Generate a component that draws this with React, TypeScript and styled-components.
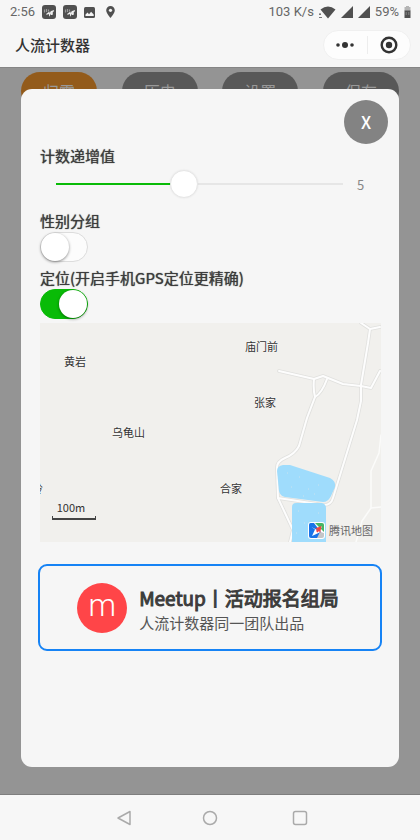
import React, { useState } from "react";
import styled, { createGlobalStyle, css } from "styled-components";

const GlobalStyle = createGlobalStyle`
  *, *::before, *::after { box-sizing: border-box; }
  body {
    margin: 0;
    background: #f6f6f6;
    color: #3c3c3c;
    font-family: "Noto Sans CJK SC", "Noto Sans", sans-serif;
  }
  button, input { font: inherit; margin: 0; }
`;

const Page = styled.div`
  display: flex;
  flex-direction: column;
  min-height: 100vh;
`;

const StatusBar = styled.div`
  display: flex;
  align-items: center;
  justify-content: space-between;
  height: 22px;
  padding: 2px 9px 0 10px;
  font: 13px/20px Roboto, sans-serif;
  color: #666;
`;

const StatusGroup = styled.div<{ $gap: number }>`
  display: flex;
  align-items: center;
  gap: ${({ $gap }) => $gap}px;
  svg { display: block; }
`;

const Header = styled.header`
  display: flex;
  align-items: center;
  justify-content: space-between;
  height: 45px;
  padding: 0 9px 0 15px;
`;

const AppTitle = styled.h1`
  margin: 0;
  font-size: 15px;
  line-height: 24px;
  font-weight: 500;
  color: #333;
`;

const Capsule = styled.div`
  display: flex;
  align-items: center;
  width: 88px;
  height: 30px;
  border: 1px solid #f0f0f0;
  border-radius: 15px;
  background: #fdfdfd;
`;

const CapsuleButton = styled.button`
  display: flex;
  flex: 1;
  align-items: center;
  justify-content: center;
  height: 18px;
  padding: 0;
  border: 0;
  background: none;
  & + & { border-left: 1px solid #ededed; }
`;

const Main = styled.main`
  position: relative;
  flex: 1;
  padding: 4px 21px 0;
  border-top: 1px solid #858585;
  border-bottom: 1px solid #7e7e7e;
  background: #949494;
`;

const Actions = styled.div`
  display: flex;
  justify-content: space-between;
`;

const ActionButton = styled.button<{ $accent?: boolean }>`
  width: 76px;
  height: 38px;
  padding: 0;
  border: 0;
  border-radius: 19px;
  font-size: 16px;
  color: #999;
  background: ${({ $accent }) => ($accent ? "#935b1b" : "#585858")};
`;

const Sheet = styled.section`
  position: absolute;
  inset: 21px 21px 27px;
  display: flex;
  flex-direction: column;
  padding: 11px 17px;
  border-radius: 11px;
  background: #f6f6f6;
`;

const CloseButton = styled.button`
  align-self: flex-end;
  width: 44px;
  height: 44px;
  margin: 0 -6px 1px 0;
  padding: 0;
  border: 0;
  border-radius: 50%;
  background: #838383;
  color: #fff;
  font-size: 17px;
  line-height: 44px;
  font-weight: 500;
`;

const Field = styled.div`
  display: flex;
  flex-direction: column;
  align-items: flex-start;
  padding: 0 2px;
  & + & { margin-top: 5px; }
`;

const Label = styled.label`
  font-size: 15px;
  line-height: 22px;
  text-shadow: 0 0 1px currentColor;
`;

const SliderRow = styled.div`
  display: flex;
  align-items: center;
  align-self: stretch;
  height: 34px;
  margin-bottom: 4px;
  padding: 0 17px 0 2px;
`;

const Slider = styled.input`
  appearance: none;
  flex: 1;
  min-width: 0;
  height: 28px;
  background: linear-gradient(
      to right,
      transparent 14px,
      #09bb07 14px,
      #09bb07 var(--fill),
      #e6e6e6 var(--fill),
      #e6e6e6 calc(100% - 14px),
      transparent calc(100% - 14px)
    )
    center / 100% 2px no-repeat;
  &::-webkit-slider-thumb {
    appearance: none;
    width: 28px;
    height: 28px;
    border: 1px solid #e6e6e6;
    border-radius: 50%;
    background: #fff;
    box-shadow: 0 0 2px rgba(0, 0, 0, 0.08);
  }
`;

const SliderValue = styled.output`
  width: 6px;
  padding-top: 2px;
  font-size: 13px;
  line-height: 20px;
  color: #888;
`;

const Switch = styled.input`
  appearance: none;
  display: flex;
  width: 48px;
  height: 30px;
  border: 1px solid #dcdcdc;
  border-radius: 15px;
  background: #fcfcfc;
  &::before {
    content: "";
    width: 28px;
    height: 28px;
    border-radius: 50%;
    background: #fff;
    box-shadow: 0 1px 3px rgba(0, 0, 0, 0.45);
  }
  ${({ checked }) =>
    checked &&
    css`
      justify-content: flex-end;
      border-color: #09bb07;
      background: #09bb07;
    `}
`;

const MapBox = styled.div`
  position: relative;
  height: 219px;
  margin: 4px 1px 0 2px;
  overflow: hidden;
  background: #f1f0ed;
  font-size: 11px;
  line-height: 16px;
  color: #333;
`;

const Roads = styled.svg`
  position: absolute;
  top: 0;
  right: 0;
  display: block;
`;

const Place = styled.span<{ $x: number; $y: number }>`
  position: absolute;
  left: ${({ $x }) => $x}px;
  top: ${({ $y }) => $y}px;
  white-space: nowrap;
  text-shadow: 0 0 2px #fff;
`;

const Scale = styled.div`
  position: absolute;
  left: 12px;
  bottom: 27px;
  width: 44px;
  text-align: center;
  padding-right: 6px;
  line-height: 15px;
  &::after {
    content: "";
    position: absolute;
    left: 0;
    right: 0;
    top: 16px;
    height: 4px;
    border: solid #444;
    border-width: 0 1px 2px;
  }
`;

const MapBrand = styled.div`
  position: absolute;
  right: 8px;
  bottom: 3px;
  display: flex;
  align-items: center;
  gap: 4px;
  color: #666;
  line-height: 17px;
`;

const Promo = styled.a`
  display: flex;
  align-items: center;
  justify-content: center;
  gap: 12px;
  height: 87px;
  margin-top: 22px;
  padding-right: 4px;
  border: 2px solid #1683f5;
  border-radius: 9px;
  color: inherit;
  text-decoration: none;
`;

const PromoLogo = styled.span`
  display: flex;
  align-items: center;
  justify-content: center;
  width: 50px;
  height: 50px;
  padding-bottom: 3px;
  border-radius: 50%;
  background: #ff4548;
  color: #fff;
  font: 300 31px/36px Roboto, sans-serif;
`;

const PromoText = styled.span`
  display: flex;
  flex-direction: column;
  padding-top: 2px;
`;

const PromoTitle = styled.strong`
  font-size: 19px;
  line-height: 28px;
  font-weight: 400;
  -webkit-text-stroke: 1px currentColor;
`;

const PromoNote = styled.span`
  font-size: 15px;
  line-height: 22px;
  color: #555;
`;

const NavBar = styled.nav`
  display: flex;
  align-items: center;
  justify-content: center;
  gap: 66px;
  height: 45px;
  background: #f7f7f7;
`;

const NavButton = styled.button`
  display: flex;
  width: 24px;
  height: 24px;
  align-items: center;
  justify-content: center;
  padding: 0;
  border: 0;
  background: none;
`;

const MessageIcon = () => (
  <svg width="14" height="14" viewBox="0 0 14 14">
    <rect width="14" height="14" rx="3" fill="#505050" />
    <path d="M2.500 4.500v3M4.500 4v3M6.500 4.500v2" fill="none" stroke="#999" strokeWidth="1.200" />
    <path d="M4.500 9.500 7 7.500l.5 2.500L9.500 6v4M10.200 9.800V6.700q.4-1 1.800-.8" fill="none" stroke="#eee" strokeWidth="1.200" />
  </svg>
);

const PictureIcon = () => (
  <svg width="11" height="11" viewBox="0 0 11 11">
    <rect width="11" height="11" rx="1.500" fill="#505050" />
    <path d="M1.500 9V7.500L3.600 5.600 5 7.200 7.100 4.800 9.700 7.500V9z" fill="#f6f6f6" />
  </svg>
);

const PinIcon = () => (
  <svg width="13" height="12" viewBox="-4 0 13 12">
    <path d="M4.500 0A4.300 4.300 0 0 0 .2 4.300C.2 7.500 4.500 12 4.500 12s4.300-4.500 4.300-7.700A4.300 4.300 0 0 0 4.500 0z" fill="#505050" />
    <circle cx="4.500" cy="4.300" r="1.600" fill="#f6f6f6" />
  </svg>
);

const WifiIcon = () => (
  <svg width="17" height="13" viewBox="0 0 17 13">
    <path d="M1.500 3.500Q9-2.500 16.500 3.500L9 12.500z" fill="#505050" />
    <path d="M0 8.500h2M1 7v2M0 11.500h3" stroke="#777" strokeWidth="1.200" />
  </svg>
);

const SignalIcon = () => (
  <svg width="12" height="12" viewBox="0 0 12 12">
    <path d="M12 0v12H0z" fill="#505050" />
  </svg>
);

const BatteryIcon = () => (
  <svg width="7" height="12" viewBox="0 0 7 12">
    <path d="M2 0h3v1h1.500v4h-6V1H2z" fill="#b5b5b5" />
    <path d="M.5 4.500h6V12h-6z" fill="#505050" />
    <path d="M2.200 6v3M4.800 6v3" stroke="#999" strokeWidth=".7" />
  </svg>
);

const roadPaths = [
  "M141 0 150 6 160 4",
  "M150 6 148 20 141 62 141 78 137 97 121 149 113 175Q111 182 104 182L58 175",
  "M59 48 94 56 103 53 123 61 141 63 151 65 160 48",
  "M94 56Q93 66 95 74L87 95 79 123Q75 131 65 135 56 139 57 146L58 175 73 207 70 219",
  "M107 56Q102 70 95 74",
];

const minorPaths = ["M161 112 159 130 151 148 151 185 142 198 136 219", "M151 185 161 184"];

const RoadMap = () => (
  <Roads width="171" height="219" viewBox="-10 0 171 219" aria-hidden="true">
    <g fill="none" strokeLinejoin="round" strokeLinecap="round">
      {minorPaths.map((d) => (
        <path key={d} d={d} stroke="#fbfbfa" strokeWidth="1.500" />
      ))}
      {roadPaths.map((d) => (
        <path key={d} d={d} stroke="#e0e0de" strokeWidth="3.600" />
      ))}
      {roadPaths.map((d) => (
        <path key={d} d={d} stroke="#fdfdfd" strokeWidth="2" />
      ))}
    </g>
    <path d="M63 142Q57 143 57 148L59 168Q60 173 65 174L103 179Q108 179 111 173L115 164Q116 158 110 155L70 142z" fill="#9fdcfc" />
    <path d="M76 180h26q4 1 4 5v34H72v-35q0-4 4-4z" fill="#9fdcfc" />
    <path d="M67 150h1M79 154h1M88 166h1M71 164h1M98 162h1M83 173h1M78 188h1M98 190h1M84 200h1M76 210h1M94 171h1" stroke="#c9e3ef" strokeWidth="1" />
  </Roads>
);

const MapBrandIcon = () => (
  <svg width="17" height="17" viewBox="0 0 17 17" aria-hidden="true">
    <rect width="17" height="17" rx="3" fill="#fff" />
    <path d="M2.500 1H6l9 12-2 3H3q-2 0-2-2V2.500Q1 1 2.500 1z" fill="#1974e8" />
    <path d="M7 1h7q2 0 2 2v7L12 6z" fill="#45b565" />
    <path d="m12 10 4 1v3q0 2-2 2H9z" fill="#c4c6c8" />
    <path d="M3.500 5 7 7.500 4 14l7.500-3.500L14 4 9 8z" fill="#fff" />
    <path d="m13.500 4-6.500 2.500 2 1L8 9l1.500 1.500L11 9l1.200 2z" fill="#f04545" />
  </svg>
);

export default function App() {
  const [step, setStep] = useState(5);
  const [gender, setGender] = useState(false);
  const [located, setLocated] = useState(true);
  const ratio = (step - 1) / 9;
  const fill = { "--fill": `calc(14px + (100% - 28px) * ${ratio})` } as React.CSSProperties;

  return (
    <Page>
      <GlobalStyle />
      <StatusBar>
        <StatusGroup $gap={7}>
          <span>2:56</span>
          <MessageIcon />
          <MessageIcon />
          <PictureIcon />
          <PinIcon />
        </StatusGroup>
        <StatusGroup $gap={5}>
          <span>103 K/s</span>
          <WifiIcon />
          <SignalIcon />
          <SignalIcon />
          <span>59%</span>
          <BatteryIcon />
        </StatusGroup>
      </StatusBar>
      <Header>
        <AppTitle>人流计数器</AppTitle>
        <Capsule>
          <CapsuleButton aria-label="更多">
            <svg width="18" height="8" viewBox="0 0 18 8" fill="#333">
              <circle cx="2" cy="4" r="1.800" />
              <circle cx="9" cy="4" r="3" />
              <circle cx="16" cy="4" r="1.800" />
            </svg>
          </CapsuleButton>
          <CapsuleButton aria-label="关闭小程序">
            <svg width="18" height="18" viewBox="0 0 18 18">
              <circle cx="9" cy="9" r="7.300" fill="none" stroke="#333" strokeWidth="2.400" />
              <circle cx="9" cy="9" r="3.200" fill="#333" />
            </svg>
          </CapsuleButton>
        </Capsule>
      </Header>
      <Main>
        <Actions>
          <ActionButton $accent>归零</ActionButton>
          <ActionButton>历史</ActionButton>
          <ActionButton>设置</ActionButton>
          <ActionButton>保存</ActionButton>
        </Actions>
        <Sheet role="dialog" aria-label="设置">
          <CloseButton aria-label="关闭">X</CloseButton>
          <Field>
            <Label htmlFor="step">计数递增值</Label>
            <SliderRow>
              <Slider
                id="step"
                type="range"
                min={1}
                max={10}
                value={step}
                style={fill}
                onChange={(e) => setStep(Number(e.target.value))}
              />
              <SliderValue htmlFor="step">{step}</SliderValue>
            </SliderRow>
          </Field>
          <Field>
            <Label htmlFor="gender">性别分组</Label>
            <Switch id="gender" type="checkbox" role="switch" checked={gender} onChange={(e) => setGender(e.target.checked)} />
          </Field>
          <Field>
            <Label htmlFor="located">定位(开启手机GPS定位更精确)</Label>
            <Switch id="located" type="checkbox" role="switch" checked={located} onChange={(e) => setLocated(e.target.checked)} />
          </Field>
          <MapBox>
            <RoadMap />
            <Place $x={24} $y={30}>黄岩</Place>
            <Place $x={205} $y={15}>庙门前</Place>
            <Place $x={214} $y={71}>张家</Place>
            <Place $x={72} $y={101}>乌龟山</Place>
            <Place $x={180} $y={157}>合家</Place>
            <Place $x={-8} $y={157}>岭</Place>
            <Scale>100m</Scale>
            <MapBrand>
              <MapBrandIcon />
              腾讯地图
            </MapBrand>
          </MapBox>
          <Promo href="#meetup">
            <PromoLogo aria-hidden="true">m</PromoLogo>
            <PromoText>
              <PromoTitle>Meetup丨活动报名组局</PromoTitle>
              <PromoNote>人流计数器同一团队出品</PromoNote>
            </PromoText>
          </Promo>
        </Sheet>
      </Main>
      <NavBar>
        <NavButton aria-label="返回">
          <svg width="24" height="24" viewBox="0 0 24 24" fill="none" stroke="#aaa" strokeWidth="1.500" strokeLinejoin="round">
            <path d="M22 5.500v13L10 12z" />
          </svg>
        </NavButton>
        <NavButton aria-label="主页">
          <svg width="16" height="16" viewBox="0 0 16 16" fill="none" stroke="#aaa" strokeWidth="1.500">
            <circle cx="8" cy="8" r="6.500" />
          </svg>
        </NavButton>
        <NavButton aria-label="最近任务">
          <svg width="16" height="16" viewBox="0 0 16 16" fill="none" stroke="#aaa" strokeWidth="1.500">
            <rect x="1.500" y="1.500" width="13" height="13" rx="2" />
          </svg>
        </NavButton>
      </NavBar>
    </Page>
  );
}
